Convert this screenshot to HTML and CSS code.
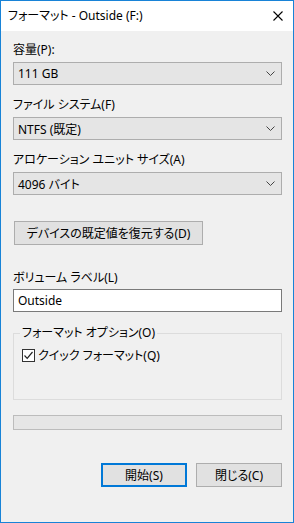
FILE: index.html
```html
<!DOCTYPE html>
<html lang="ja">
<head>
<meta charset="utf-8">
<link rel="stylesheet" href="styles.css">
<title>フォーマット - Outside (F:)</title>
</head>
<body>
<div id="dialog">
  <div id="titlebar">
    <span class="title">フォーマット - Outside (F:)</span>
    <svg class="close" width="10" height="10" viewBox="0 0 10 10"><path d="M0.5 0.5 L9.5 9.5 M9.5 0.5 L0.5 9.5" stroke="#000" stroke-width="1.1" fill="none"/></svg>
  </div>
  <div id="content">
    <div class="label">容量(P):</div>
    <div class="combo"><span>111 GB</span><svg width="9" height="5" viewBox="0 0 9 5"><path d="M0.5 0.5 L4.5 4.5 L8.5 0.5" stroke="#444" fill="none"/></svg></div>

    <div class="label">ファイル システム(F)</div>
    <div class="combo"><span>NTFS (既定)</span><svg width="9" height="5" viewBox="0 0 9 5"><path d="M0.5 0.5 L4.5 4.5 L8.5 0.5" stroke="#444" fill="none"/></svg></div>

    <div class="label">アロケーション ユニット サイズ(A)</div>
    <div class="combo"><span>4096 バイト</span><svg width="9" height="5" viewBox="0 0 9 5"><path d="M0.5 0.5 L4.5 4.5 L8.5 0.5" stroke="#444" fill="none"/></svg></div>

    <button class="btn restore">デバイスの既定値を復元する(D)</button>

    <div class="label vol">ボリューム ラベル(L)</div>
    <div class="textbox">Outside</div>

    <div class="group">
      <span class="legend">フォーマット オプション(O)</span>
      <div class="check">
        <span class="box"><svg width="11" height="11" viewBox="0 0 11 11"><path d="M1.5 5.5 L4.2 8.3 L9.5 2" stroke="#222" stroke-width="1.2" fill="none"/></svg></span>
        <span>クイック フォーマット(Q)</span>
      </div>
    </div>

    <div class="progress"></div>

    <div class="actions">
      <button class="btn default">開始(S)</button>
      <button class="btn">閉じる(C)</button>
    </div>
  </div>
</div>
</body>
</html>
```

FILE: styles.css
```css
body {
  margin: 0;
  padding: 0;
  font-family: "Noto Sans", "Noto Sans CJK JP", sans-serif;
  font-size: 12px;
  font-feature-settings: "palt";
  color: #000;
}
#dialog {
  width: 294px;
  height: 523px;
  box-sizing: border-box;
  border: 1px solid #1883d7;
  background-color: #f0f0f0;
}
#titlebar {
  height: 30px;
  background-color: #fff;
  display: flex;
  align-items: center;
  justify-content: space-between;
  padding: 0 10px 0 7px;
}
#titlebar .title { line-height: 16px; }
#titlebar .close { margin-top: -1px; }
#content {
  padding: 11px 11px 0 12px;
}
.label {
  height: 16px;
  line-height: 16px;
  margin-bottom: 4px;
}
.combo {
  height: 23px;
  box-sizing: border-box;
  border: 1px solid #adadad;
  background-color: #e5e5e5;
  display: flex;
  align-items: center;
  justify-content: space-between;
  padding: 0 6px 0 4px;
  margin-bottom: 12px;
}
.btn {
  font-family: inherit;
  font-size: 12px;
  font-feature-settings: "palt";
  color: #000;
  height: 24px;
  box-sizing: border-box;
  border: 1px solid #adadad;
  background-color: #e1e1e1;
  padding: 0;
  margin: 0;
  border-radius: 0;
}
.restore {
  display: block;
  width: 189px;
  margin: 26px 0 0 1px;
}
.vol { margin: 25px 0 3px; }
.textbox {
  height: 23px;
  box-sizing: border-box;
  border: 1px solid #7a7a7a;
  background-color: #fff;
  line-height: 21px;
  padding-left: 4px;
}
.group {
  margin-top: 21px;
  height: 67px;
  box-sizing: border-box;
  border: 1px solid #dcdcdc;
  position: relative;
  padding: 13px 0 0 8px;
}
.legend {
  position: absolute;
  top: -9px;
  left: 6px;
  padding: 0 2px;
  line-height: 16px;
  background-color: #f0f0f0;
}
.check {
  display: flex;
  align-items: center;
  gap: 3px;
  height: 16px;
}
.box {
  width: 13px;
  height: 13px;
  box-sizing: border-box;
  border: 1px solid #333;
  background-color: #fff;
  display: flex;
  align-items: center;
  justify-content: center;
}
.progress {
  margin-top: 15px;
  height: 15px;
  box-sizing: border-box;
  border: 1px solid #bcbcbc;
  background-color: #e6e6e6;
}
.actions {
  display: flex;
  justify-content: flex-end;
  gap: 9px;
  margin-top: 33px;
}
.actions .btn { width: 86px; }
.default { border: 2px solid #0078d7; }
```
